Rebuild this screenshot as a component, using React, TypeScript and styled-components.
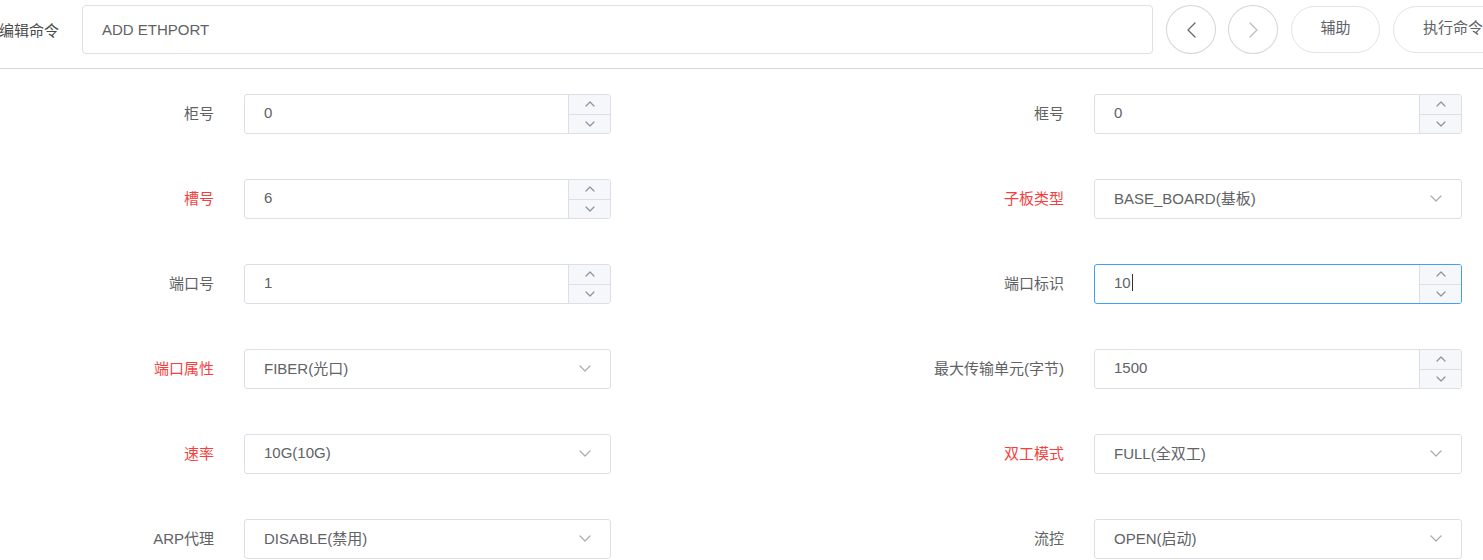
import React from "react";
import styled, { createGlobalStyle } from "styled-components";

const GlobalStyle = createGlobalStyle`
  html, body {
    margin: 0;
    padding: 0;
    background: #fff;
    overflow: hidden;
  }
  body {
    font-family: "Liberation Sans", Arial, "Noto Sans CJK SC", sans-serif;
    font-size: 15px;
    color: #606266;
  }
`;

const Page = styled.div`
  width: 1483px;
  overflow: hidden;
`;

const CommandBar = styled.div`
  display: flex;
  align-items: center;
  gap: 12px;
  padding: 5px 0 14px;
  border-bottom: 1px solid #d4d6db;
  width: 1600px;
`;

const BarLabel = styled.div`
  width: 71px;
  margin-left: -1px;
  padding-bottom: 1px;
  color: #4a4a4a;
  font-size: 15px;
`;

const CommandInput = styled.div`
  box-sizing: border-box;
  width: 1071px;
  height: 49px;
  border: 1px solid #dcdfe6;
  border-radius: 4px;
  padding: 0 0 1px 19px;
  display: flex;
  align-items: center;
  color: #606266;
  font-size: 15px;
`;

const CircleButton = styled.button<{ $disabled?: boolean }>`
  box-sizing: border-box;
  width: 50px;
  height: 49px;
  border-radius: 50%;
  border: 1px solid #d6d6d6;
  background: #fff;
  display: flex;
  align-items: center;
  justify-content: center;
  padding: 0;
  margin-left: ${(p) => (p.$disabled ? "0" : "1px")};
  color: ${(p) => (p.$disabled ? "#b9bcc2" : "#606266")};
`;

const PillButton = styled.button<{ $width: number }>`
  box-sizing: border-box;
  width: ${(p) => p.$width}px;
  height: 47px;
  border-radius: 24px;
  border: 1px solid #e2e3e6;
  background: #fff;
  color: #606266;
  font-family: inherit;
  font-size: 15px;
  padding: 0 0 6px;
  margin-left: 1px;
  flex-shrink: 0;
`;

const Form = styled.div`
  display: grid;
  grid-template-columns: 214px 367px 423px 368px;
  grid-auto-rows: 40px;
  column-gap: 30px;
  row-gap: 45px;
  padding-top: 25px;
`;

const Label = styled.div<{ $required?: boolean }>`
  display: flex;
  align-items: center;
  justify-content: flex-end;
  padding-bottom: 3px;
  color: ${(p) => (p.$required ? "#f53f3f" : "#606266")};
  font-size: 15px;
`;

const Field = styled.div<{ $focused?: boolean }>`
  box-sizing: border-box;
  height: 40px;
  border: 1px solid ${(p) => (p.$focused ? "#409eff" : "#dcdfe6")};
  border-radius: 3px;
  display: flex;
  align-items: stretch;
  background: #fff;
  overflow: hidden;
`;

const Value = styled.div`
  flex: 1;
  display: flex;
  align-items: center;
  padding: 0 0 3px 19px;
  color: #606266;
  font-size: 15px;
`;

const Caret = styled.span`
  display: inline-block;
  width: 1px;
  height: 17px;
  background: #303133;
  margin-left: 1px;
`;

const Stepper = styled.div`
  width: 41px;
  display: flex;
  flex-direction: column;
  background: #f5f7fa;
  border-left: 1px solid #dcdfe6;
`;

const StepButton = styled.div<{ $top?: boolean }>`
  flex: 1;
  display: flex;
  align-items: center;
  justify-content: center;
  color: #8a93a6;
  border-bottom: ${(p) => (p.$top ? "1px solid #dcdfe6" : "none")};
`;

const Arrow = styled.div`
  width: 51px;
  display: flex;
  align-items: center;
  justify-content: center;
  padding-bottom: 1px;
  color: #a8abb2;
`;

const Chevron = ({ dir, w, h }: { dir: "up" | "down" | "left" | "right"; w: number; h: number }) => {
  const pts = {
    up: `1,${h - 1} ${w / 2},1 ${w - 1},${h - 1}`,
    down: `1,1 ${w / 2},${h - 1} ${w - 1},1`,
    left: `${w - 1},1 1,${h / 2} ${w - 1},${h - 1}`,
    right: `1,1 ${w - 1},${h / 2} 1,${h - 1}`,
  }[dir];
  return (
    <svg width={w} height={h} viewBox={`0 0 ${w} ${h}`} fill="none">
      <polyline points={pts} stroke="currentColor" strokeWidth="1.2" strokeLinecap="round" strokeLinejoin="round" />
    </svg>
  );
};

type Item = {
  label: string;
  value: string;
  kind: "number" | "select";
  required?: boolean;
  focused?: boolean;
};

const rows: [Item, Item][] = [
  [
    { label: "柜号", value: "0", kind: "number" },
    { label: "框号", value: "0", kind: "number" },
  ],
  [
    { label: "槽号", value: "6", kind: "number", required: true },
    { label: "子板类型", value: "BASE_BOARD(基板)", kind: "select", required: true },
  ],
  [
    { label: "端口号", value: "1", kind: "number" },
    { label: "端口标识", value: "10", kind: "number", focused: true },
  ],
  [
    { label: "端口属性", value: "FIBER(光口)", kind: "select", required: true },
    { label: "最大传输单元(字节)", value: "1500", kind: "number" },
  ],
  [
    { label: "速率", value: "10G(10G)", kind: "select", required: true },
    { label: "双工模式", value: "FULL(全双工)", kind: "select", required: true },
  ],
  [
    { label: "ARP代理", value: "DISABLE(禁用)", kind: "select" },
    { label: "流控", value: "OPEN(启动)", kind: "select" },
  ],
];

const FormField = ({ item }: { item: Item }) => (
  <>
    <Label $required={item.required}>{item.label}</Label>
    <Field $focused={item.focused}>
      <Value>
        {item.value}
        {item.focused && <Caret />}
      </Value>
      {item.kind === "number" ? (
        <Stepper>
          <StepButton $top>
            <Chevron dir="up" w={10} h={6} />
          </StepButton>
          <StepButton>
            <Chevron dir="down" w={10} h={6} />
          </StepButton>
        </Stepper>
      ) : (
        <Arrow>
          <Chevron dir="down" w={12} h={7} />
        </Arrow>
      )}
    </Field>
  </>
);

export default function App() {
  return (
    <Page>
      <GlobalStyle />
      <CommandBar>
        <BarLabel>编辑命令</BarLabel>
        <CommandInput>ADD ETHPORT</CommandInput>
        <CircleButton>
          <Chevron dir="left" w={9} h={16} />
        </CircleButton>
        <CircleButton $disabled>
          <Chevron dir="right" w={9} h={16} />
        </CircleButton>
        <PillButton $width={89}>辅助</PillButton>
        <PillButton $width={120}>执行命令</PillButton>
      </CommandBar>
      <Form>
        {rows.map(([a, b]) => (
          <React.Fragment key={a.label}>
            <FormField item={a} />
            <FormField item={b} />
          </React.Fragment>
        ))}
      </Form>
    </Page>
  );
}
